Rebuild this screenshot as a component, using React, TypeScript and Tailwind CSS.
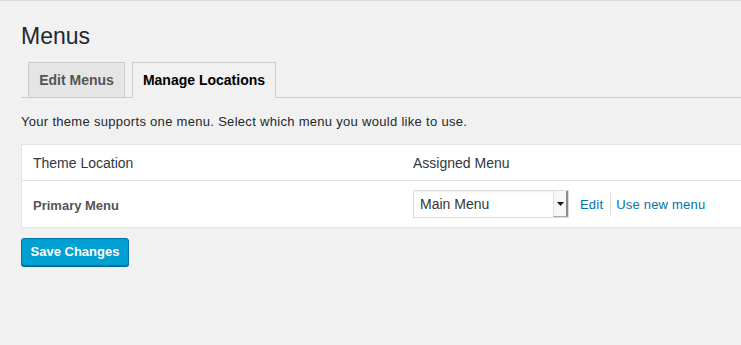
export default function App() {
  return (
    <div
      className="min-h-[345px] w-full overflow-hidden bg-[#f1f1f1] text-[#23282d]"
      style={{ fontFamily: '"Liberation Sans", Arial, sans-serif' }}
    >
      <div className="h-px bg-[#dcdcdc]" />
      <div className="w-[800px] pl-[21px]">
        <h1 className="mt-[21px] text-[23px] leading-[29px] font-normal text-[#23282d]">Menus</h1>
        <div className="mt-[11px] flex h-[36px] items-end gap-[7px] border-b border-[#cccccc] pl-[7px]">
          <div className="-mb-px flex h-[36px] w-[97px] items-center justify-center border border-[#cccccc] bg-[#e5e5e5] text-[14px] font-semibold text-[#555555]">
            Edit Menus
          </div>
          <div className="-mb-px flex h-[36px] w-[144px] items-center justify-center border border-[#cccccc] border-b-[#f1f1f1] bg-[#f1f1f1] text-[14px] font-semibold text-[#000000]">
            Manage Locations
          </div>
        </div>
        <p className="mt-[14px] text-[13px] leading-[19px] tracking-[0.3px] text-[#23282d]">
          Your theme supports one menu. Select which menu you would like to use.
        </p>
        <div className="mt-[13px] border border-[#e5e5e5] bg-white">
          <div className="flex h-[36px] items-center border-b border-[#e1e1e1] text-[14px] text-[#32373c]">
            <div className="w-[379px] pl-[11px] pt-px">Theme Location</div>
            <div className="pl-[12px] pt-px">Assigned Menu</div>
          </div>
          <div className="flex h-[46px] items-center text-[13px]">
            <div className="mt-[3px] w-[379px] pl-[11px] font-semibold text-[#555555]">Primary Menu</div>
            <div className="flex items-center pl-[12px]">
              <div className="flex h-[28px] w-[156px] items-stretch border border-[#dddddd] bg-white shadow-[inset_0_1px_2px_rgba(0,0,0,0.07)]">
                <div className="flex flex-1 items-center pl-[6px] pt-px text-[14px] text-[#32373c]">Main Menu</div>
                <div className="flex w-[15px] items-center justify-center border-l border-[#e0e0e0] border-r-2 border-r-[#8a8a8a] border-b border-b-[#aaaaaa] bg-[#f7f7f7]">
                  <svg width="7" height="4" viewBox="0 0 7 4">
                    <path d="M0 0 L7 0 L3.5 4 Z" fill="#111" />
                  </svg>
                </div>
              </div>
              <a className="ml-[11px] mt-[2px] text-[13px] tracking-[0.2px] text-[#0073aa]">Edit</a>
              <span className="ml-[7px] h-[22px] w-px bg-[#dddddd]" />
              <a className="ml-[5px] mt-[2px] text-[13px] tracking-[0.2px] text-[#0073aa]">Use new menu</a>
            </div>
          </div>
        </div>
        <button className="mt-[10px] flex h-[28px] w-[108px] items-center justify-center rounded-[3px] border border-[#0073aa] bg-[#00a0d2] text-[13px] font-semibold text-white shadow-[0_1px_0_#006799]">
          Save Changes
        </button>
      </div>
    </div>
  );
}
